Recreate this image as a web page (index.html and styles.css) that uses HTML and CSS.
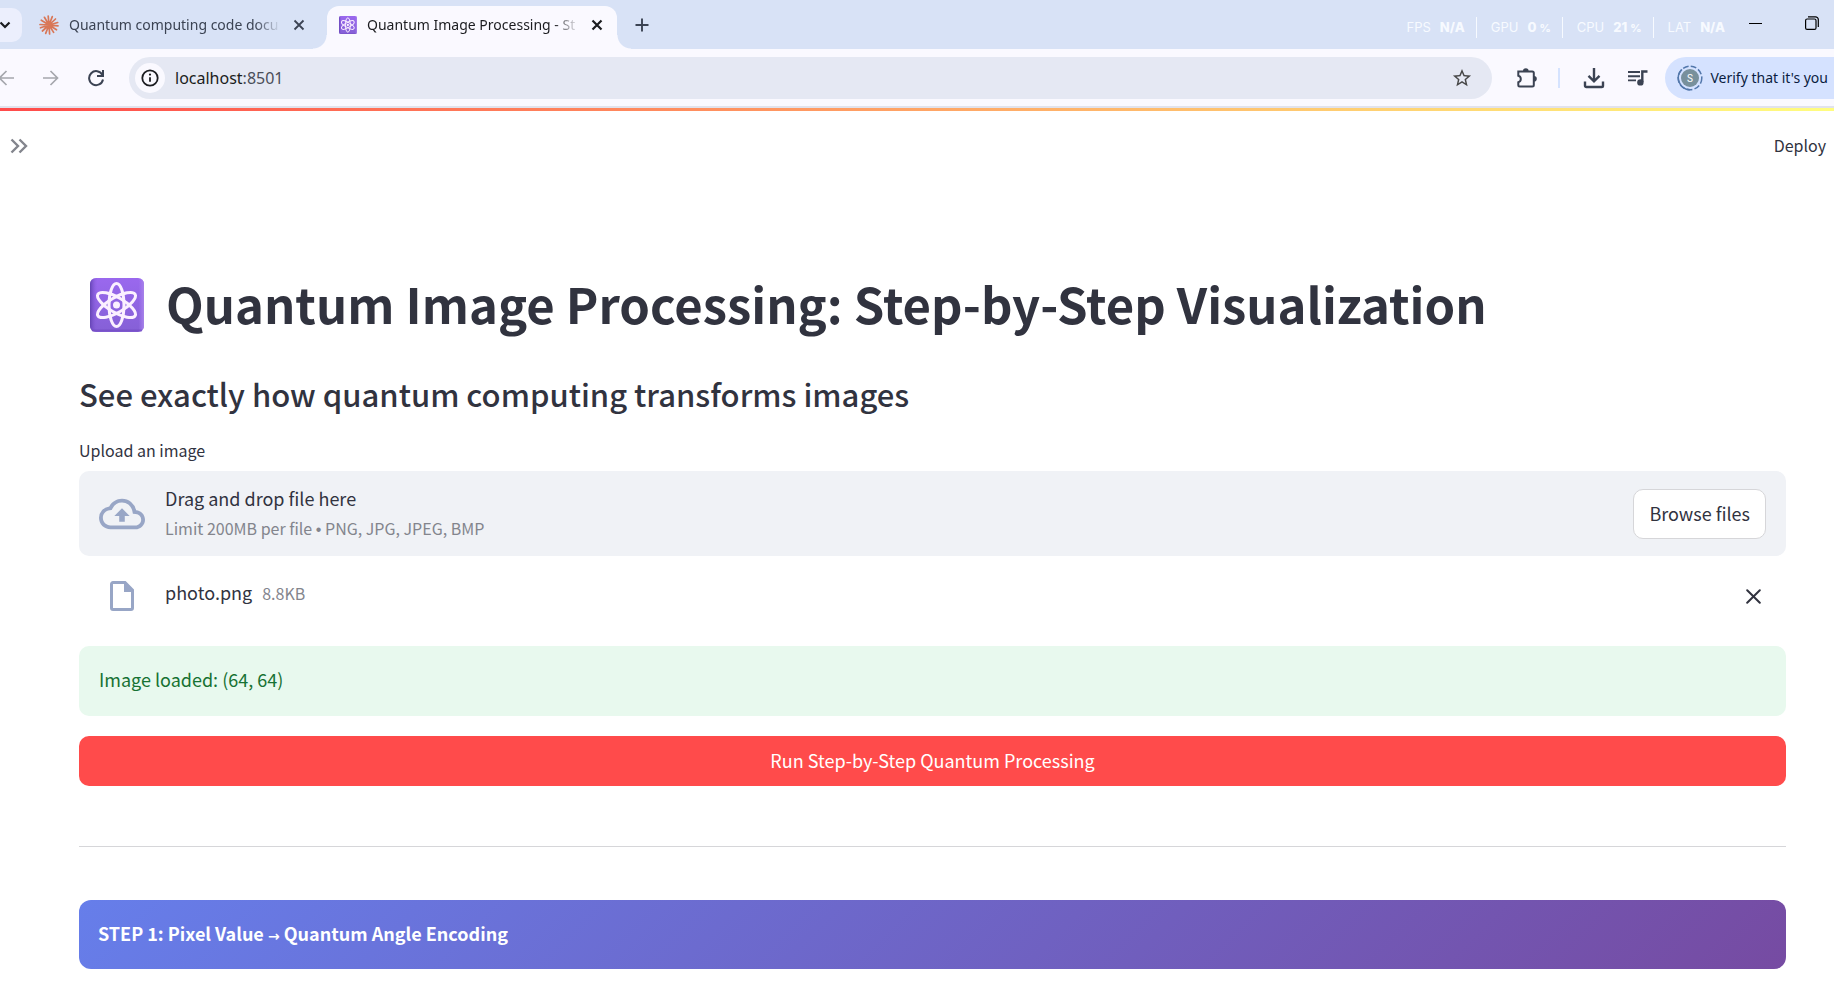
FILE: index.html
```html
<!DOCTYPE html>
<html lang="en">
<head>
<meta charset="utf-8">
<title>Quantum Image Processing - Step-by-Step</title>
<link rel="stylesheet" href="styles.css">
</head>
<body>
<svg class="defs" aria-hidden="true">
  <defs>
    <linearGradient id="violet" x1="0" y1="0" x2="0" y2="1">
      <stop offset="0" stop-color="#9a68ee"/>
      <stop offset="1" stop-color="#8560d6"/>
    </linearGradient>
    <linearGradient id="violet-edge" x1="0" y1="0" x2="1" y2="0">
      <stop offset="0" stop-color="#6444b4"/>
      <stop offset="0.14" stop-color="#8b5fe0" stop-opacity="0"/>
      <stop offset="0.9" stop-color="#a67cf0" stop-opacity="0"/>
      <stop offset="1" stop-color="#a783e8"/>
    </linearGradient>
    <symbol id="atom" viewBox="0 0 54 54">
      <rect width="54" height="54" rx="6" fill="url(#violet)"/>
      <rect width="54" height="54" rx="6" fill="url(#violet-edge)"/>
      <path d="M2 52.500h50" stroke="#7049c0" stroke-width="2" opacity="0.6"/>
      <g fill="none" stroke="#fbf0ff" stroke-width="3">
        <ellipse cx="26.500" cy="27" rx="7.500" ry="21.500"/>
        <ellipse cx="26.500" cy="27" rx="7.500" ry="21.500" transform="rotate(60 26.500 27)"/>
        <ellipse cx="26.500" cy="27" rx="7.500" ry="21.500" transform="rotate(120 26.500 27)"/>
      </g>
      <circle cx="26.500" cy="27" r="3.500" fill="#fbf0ff"/>
    </symbol>
  </defs>
</svg>

<header class="browser">
  <div class="tabstrip">
    <button class="tab-search" aria-label="Search tabs">
      <svg width="12" height="8" viewBox="0 0 12 8"><path d="M1.500 1.500 6 6l4.500-4.500" fill="none" stroke="#1b1c20" stroke-width="2.200"/></svg>
    </button>
    <div class="tab">
      <svg width="20" height="20" viewBox="0 0 20 20"><g stroke="#d97757" stroke-width="1.700" stroke-linecap="round"><path d="M10 10 9.200 1M10 10l3.300-8.400M10 10l6.500-6M10 10l8.700-2.500M10 10l9 .8M10 10l7.500 4.800M10 10l4.600 7.400M10 10l.6 9M10 10l-3.300 8.400M10 10l-6.600 6M10 10l-8.500 2.800M10 10 1 9.500M10 10 2.300 5.200M10 10 5.400 2.300"/></g></svg>
      <span class="tab-title">Quantum computing code docu</span>
      <button class="tab-close" aria-label="Close tab"><svg width="12" height="12" viewBox="0 0 12 12"><path d="m1.500 1.500 9 9m0-9-9 9" stroke="#3b4353" stroke-width="1.800"/></svg></button>
    </div>
    <div class="tab tab-active">
      <svg width="18" height="18"><use href="#atom"/></svg>
      <span class="tab-title">Quantum Image Processing - St</span>
      <button class="tab-close" aria-label="Close tab"><svg width="12" height="12" viewBox="0 0 12 12"><path d="m1.500 1.500 9 9m0-9-9 9" stroke="#1b1c20" stroke-width="2.200"/></svg></button>
    </div>
    <button class="new-tab" aria-label="New tab"><svg width="14" height="14" viewBox="0 0 14 14"><path d="M7 .5v13M.5 7h13" stroke="#3b4353" stroke-width="1.900"/></svg></button>
    <div class="stats">
      <span class="stat">FPS <b>N/A</b></span>
      <span class="stat">GPU <b>0<small>%</small></b></span>
      <span class="stat">CPU <b>21<small>%</small></b></span>
      <span class="stat">LAT <b>N/A</b></span>
    </div>
    <button class="win-button" aria-label="Minimize"><svg width="13" height="13" viewBox="0 0 13 13"><path d="M0 7.500h13" stroke="#000" stroke-width="1"/></svg></button>
    <button class="win-button" aria-label="Restore"><svg width="14" height="14" viewBox="0 0 14 14"><g fill="none" stroke="#000" stroke-width="1.200"><rect x=".6" y="3" width="10.400" height="10.400" rx="1.500"/><path d="M3 .8h7.500a2.800 2.800 0 0 1 2.800 2.800V11"/></g></svg></button>
  </div>

  <div class="toolbar">
    <button class="nav" aria-label="Back"><svg width="16" height="16" viewBox="0 0 16 16"><path d="M8.500 1 1.500 8l7 7M1.500 8H16" fill="none" stroke="#a5a7ad" stroke-width="1.700"/></svg></button>
    <button class="nav" aria-label="Forward"><svg width="16" height="16" viewBox="0 0 16 16"><path d="m7.500 1 7 7-7 7M14.500 8H0" fill="none" stroke="#a5a7ad" stroke-width="1.700"/></svg></button>
    <button class="nav" aria-label="Reload"><svg width="18" height="18" viewBox="0 0 18 18"><path d="M15.300 5.800A7 7 0 1 0 16 10.500" fill="none" stroke="#3b4353" stroke-width="2"/><path d="M16 1v6h-6" fill="none" stroke="#3b4353" stroke-width="2"/></svg></button>
    <div class="omnibox">
      <button class="site-info" aria-label="Site information"><svg width="18" height="18" viewBox="0 0 18 18"><circle cx="9" cy="9" r="7.700" fill="none" stroke="#1b1c20" stroke-width="1.800"/><path d="M9 8.200v4.600" stroke="#1b1c20" stroke-width="1.800"/><circle cx="9" cy="5.600" r="1.100" fill="#1b1c20"/></svg></button>
      <div class="url">localhost<span class="port">:8501</span></div>
      <button class="nav" aria-label="Bookmark"><svg width="20" height="20" viewBox="1 1 22 22"><path fill="#474747" d="m22 9.240-7.190-.62L12 2 9.190 8.630 2 9.240l5.460 4.730L5.820 21 12 17.270 18.180 21l-1.630-7.030L22 9.240zM12 15.400l-3.760 2.270 1-4.280-3.320-2.880 4.380-.38L12 6.100l1.710 4.040 4.380.38-3.320 2.880 1 4.280L12 15.400z"/></svg></button>
    </div>
    <button class="nav" aria-label="Extensions"><svg width="22" height="22" viewBox="0 0 22 22"><path d="M2.500 4.500h13.800a1.500 1.500 0 0 1 1.500 1.500v12a1.500 1.500 0 0 1-1.500 1.500H3.800A1.500 1.500 0 0 1 2.300 18v-2.800a3.300 3.300 0 0 0 0-6.400V4.500z" fill="none" stroke="#3b4353" stroke-width="2"/><path d="M7 4a2.800 2.800 0 0 1 5.600 0zM18 9a2.800 2.800 0 0 1 0 5.600z" fill="#3b4353"/></svg></button>
    <span class="divider"></span>
    <button class="nav" aria-label="Downloads"><svg width="22" height="22" viewBox="0 0 22 22"><path d="M11 1v13M5.500 8.800 11 14.300l5.500-5.500M2 14.500v4.200a1.300 1.300 0 0 0 1.300 1.300h15.400a1.300 1.300 0 0 0 1.300-1.300v-4.200" fill="none" stroke="#3b4353" stroke-width="2.400"/></svg></button>
    <button class="nav" aria-label="Media"><svg width="20" height="16" viewBox="0 0 20 16"><path d="M0 2h12M0 6.200h12M0 10.400h8" stroke="#3b4353" stroke-width="1.900"/><path d="M14.300 12V1.500H19.500" fill="none" stroke="#3b4353" stroke-width="2.400"/><circle cx="12.400" cy="12.400" r="3.200" fill="#3b4353"/></svg></button>
    <button class="profile">
      <svg width="26" height="26" viewBox="0 0 26 26"><circle cx="13" cy="13" r="11.800" fill="none" stroke="#5277ab" stroke-width="1.500" stroke-dasharray="5.800 2.200"/><path d="M13 24.800A11.800 11.800 0 0 1 5 4.500" fill="none" stroke="#5277ab" stroke-width="1.500"/><circle cx="13" cy="13" r="9" fill="#78909c"/><text x="13" y="16.500" class="initial">S</text></svg>
      <span>Verify that it's you</span>
    </button>
  </div>
</header>

<div class="rainbow"></div>

<div class="app">
  <div class="app-bar">
    <button class="plain" aria-label="Expand sidebar"><svg width="18" height="16" viewBox="0 0 18 16"><path d="m1.500 1.500 6.500 6.500-6.500 6.500m8-13L16 8l-6.500 6.500" fill="none" stroke="#83858d" stroke-width="2.400"/></svg></button>
    <button class="plain deploy">Deploy</button>
  </div>

  <main class="content">
    <h1><svg class="atom" width="54" height="54" role="img" aria-label="Atom symbol"><use href="#atom"/></svg>Quantum Image Processing: Step-by-Step Visualization</h1>
    <h3>See exactly how quantum computing transforms images</h3>

    <label class="upload-label" for="browse">Upload an image</label>
    <section class="dropzone">
      <svg width="46" height="46" viewBox="0 0 24 24"><path fill="#98a6c6" d="M19.350 10.040A7.490 7.490 0 0 0 12 4C9.110 4 6.600 5.640 5.350 8.040A5.994 5.994 0 0 0 0 14c0 3.310 2.690 6 6 6h13c2.760 0 5-2.240 5-5 0-2.640-2.050-4.780-4.650-4.960zM19 18H6c-2.210 0-4-1.790-4-4 0-2.050 1.530-3.760 3.560-3.970l1.070-.11.5-.95A5.469 5.469 0 0 1 12 6c2.620 0 4.880 1.860 5.390 4.430l.3 1.500 1.530.11A2.980 2.980 0 0 1 22 15c0 1.650-1.350 3-3 3zM8 13h2.550v3h2.900v-3H16l-4-4z"/></svg>
      <div class="drop-text">
        <span>Drag and drop file here</span>
        <span class="muted">Limit 200MB per file <span class="bullet">•</span> PNG, JPG, JPEG, BMP</span>
      </div>
      <button class="browse" id="browse">Browse files</button>
    </section>

    <div class="file">
      <svg width="24" height="30" viewBox="0 0 24 30"><path d="M3 1.500h12L22.500 9v18a1.500 1.500 0 0 1-1.500 1.500H3A1.500 1.500 0 0 1 1.500 27V3A1.500 1.500 0 0 1 3 1.500z" fill="none" stroke="#98a6c6" stroke-width="3"/><path d="M14 1.500V11h9.500z" fill="#98a6c6"/></svg>
      <div class="file-info">
        <span>photo.png</span>
        <span class="muted">8.8KB</span>
      </div>
      <button class="plain" aria-label="Remove file"><svg width="15" height="15" viewBox="0 0 15 15"><path d="m1.200 1.200 12.600 12.600m0-12.600L1.200 13.800" stroke="#31333f" stroke-width="2" stroke-linecap="round"/></svg></button>
    </div>

    <div class="alert" role="status">Image loaded: (64, 64)</div>
    <button class="run">Run Step-by-Step Quantum Processing</button>
    <hr>
    <div class="step">STEP 1: Pixel Value <span class="arrow">→</span> Quantum Angle Encoding</div>
  </main>
</div>
</body>
</html>
```
FILE: styles.css
```css
* { box-sizing: border-box; }

body {
  margin: 0;
  background: #fff;
  color: #31333f;
  font-family: "Noto Sans CJK SC", "Open Sans", sans-serif;
  font-size: 18px;
  line-height: 32px;
  overflow: hidden;
}

button {
  margin: 0;
  padding: 0;
  border: 0;
  background: none;
  color: inherit;
  font: inherit;
}

svg { display: block; flex: none; }

.defs { position: absolute; width: 0; height: 0; }

/* Browser frame */
.browser {
  font-family: "Noto Sans", "Open Sans", sans-serif;
  background: #faf9ff;
  border-bottom: 2px solid #e1e2ec;
}

.tabstrip {
  display: flex;
  align-items: center;
  height: 49px;
  background: #d8e2f6;
}

.tab-search {
  display: grid;
  place-items: center;
  width: 34px;
  height: 34px;
  margin-left: -12px;
  border-radius: 10px;
  background: #eceffd;
}

.tab {
  display: flex;
  align-items: center;
  gap: 10px;
  width: 293px;
  padding: 0 10px 0 17px;
  font-size: 14px;
  line-height: 20px;
  color: #3b4353;
}

.tab-title {
  flex: 1;
  overflow: hidden;
  white-space: nowrap;
  mask-image: linear-gradient(90deg, #000 calc(100% - 26px), transparent);
}

.tab-close { margin-left: 2px; }

.tab-active {
  position: relative;
  align-self: stretch;
  width: 290px;
  margin: 6px 0 0 12px;
  padding: 0 14px 6px 12px;
  border-radius: 12px 12px 0 0;
  background: #faf9ff;
  color: #1b1c20;
}

.tab-active::before,
.tab-active::after {
  content: "";
  position: absolute;
  bottom: 0;
  width: 14px;
  height: 14px;
}

.tab-active::before {
  right: 100%;
  background: radial-gradient(circle at 0 0, transparent 13px, #faf9ff 14px);
}

.tab-active::after {
  left: 100%;
  background: radial-gradient(circle at 100% 0, transparent 13px, #faf9ff 14px);
}

.new-tab { margin-left: 18px; }

.stats {
  display: flex;
  margin-left: auto;
  padding-top: 5px;
  color: #f7faff;
  font-family: Inter, sans-serif;
  font-size: 13px;
  line-height: 20px;
}

.stat { display: flex; gap: 9px; padding: 0 11px 0 14px; }
.stat + .stat { border-left: 1px solid #f7faff; }
.stat b { font-weight: 800; }
.stat small { margin-left: 3px; font-size: 11px; }

.win-button { padding: 0 15px 4px 13px; }
.win-button:last-child { padding-left: 28px; }

.toolbar {
  display: flex;
  align-items: center;
  height: 57px;
  padding-top: 1px;
}

.toolbar > .nav:nth-child(1) { margin-left: -2px; }
.toolbar > .nav:nth-child(2) { margin-left: 29px; }
.toolbar > .nav:nth-child(3) { margin: 0 24px 0 28px; }

.omnibox {
  display: flex;
  flex: 1;
  align-items: center;
  height: 42px;
  margin-right: 24px;
  padding: 0 20px 0 6px;
  border-radius: 21px;
  background: #e5e8f3;
}

.site-info {
  display: grid;
  place-items: center;
  width: 30px;
  height: 30px;
  border-radius: 50%;
  background: #faf9ff;
}

.url {
  flex: 1;
  margin-left: 10px;
  color: #1b1c20;
  font-size: 16px;
}

.port { color: #4b4e59; }

.divider {
  width: 2px;
  height: 20px;
  margin: 0 23px 0 20px;
  background: #d5e3ff;
}

.toolbar > .nav:nth-last-child(2) { margin: 0 17px 0 23px; }

.profile {
  display: flex;
  align-items: center;
  gap: 7px;
  height: 42px;
  padding: 0 6px 0 12px;
  border-radius: 21px 0 0 21px;
  background: #d5e2ff;
  color: #0b1d3f;
  font-size: 14px;
}

.initial {
  fill: #fff;
  font-family: Roboto, sans-serif;
  font-size: 10px;
  text-anchor: middle;
}

/* Application */
.rainbow {
  height: 3px;
  background: linear-gradient(90deg, #ff4b4b, #fffd80);
}

.app-bar {
  display: flex;
  align-items: center;
  justify-content: space-between;
  height: 70px;
  padding: 0 8px 0 10px;
}

.deploy { padding-bottom: 2px; font-size: 16px; }

.content {
  display: flex;
  flex-direction: column;
  padding: 82px 48px 24px 79px;
}

h1 {
  display: flex;
  align-items: center;
  gap: 22px;
  margin: 0;
  padding-left: 11px;
  font-size: 49px;
  font-weight: 700;
  line-height: 80px;
}

.atom { margin-top: 4px; }

h3 {
  margin: 30px 0 24px;
  font-size: 31px;
  font-weight: 500;
  line-height: 42px;
}

.upload-label {
  margin-bottom: 9px;
  font-size: 16px;
  line-height: 23px;
}

.dropzone {
  display: flex;
  align-items: center;
  gap: 20px;
  height: 85px;
  padding: 0 20px;
  border-radius: 10px;
  background: #f0f2f6;
}

.drop-text {
  display: flex;
  flex: 1;
  flex-direction: column;
  padding-bottom: 1px;
  line-height: 30px;
}

.muted { color: #83858d; font-size: 16px; }

.bullet {
  font-family: "Liberation Sans", sans-serif;
  line-height: 1;
}

.browse {
  height: 50px;
  padding: 0 15px 2px;
  border: 1px solid #d6d6d9;
  border-radius: 10px;
  background: #fff;
}

.file {
  display: flex;
  align-items: center;
  gap: 31px;
  height: 80px;
  margin-bottom: 10px;
  padding: 0 25px 0 31px;
}

.file-info {
  display: flex;
  flex: 1;
  align-items: baseline;
  gap: 10px;
  padding-bottom: 8px;
}

.alert {
  padding: 17px 20px 21px;
  border-radius: 10px;
  background: #e8f9ee;
  color: #177233;
}

.run {
  height: 50px;
  margin-top: 20px;
  padding-bottom: 3px;
  border-radius: 10px;
  background: #ff4b4b;
  color: #fff;
}

hr {
  width: 100%;
  margin: 60px 0 53px;
  border: 0;
  border-top: 1px solid #d6d6d9;
}

.step {
  padding: 17px 19px 20px;
  border-radius: 12px;
  background: linear-gradient(135deg, #667eea 0%, #764ba2 100%);
  color: #fff;
  font-weight: 700;
}

.arrow {
  font-family: "DejaVu Sans", sans-serif;
  font-size: 14px;
  line-height: 1;
}
```
